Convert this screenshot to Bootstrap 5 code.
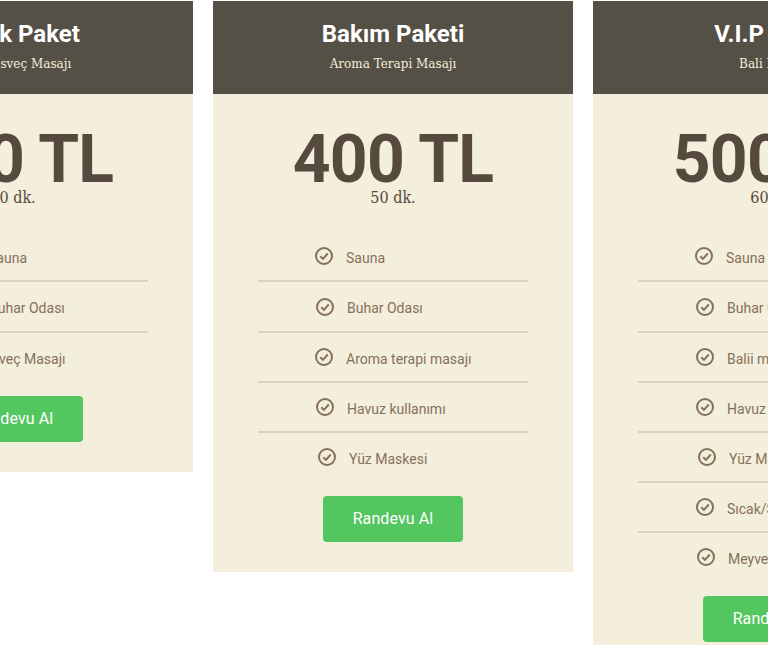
<!DOCTYPE html>
<html lang="en">
<head>
  <meta charset="UTF-8">
  <title>Paketler</title>
  <meta name="viewport" content="width=device-width, initial-scale=1">
  <link href="https://cdn.jsdelivr.net/npm/bootstrap@5.3.3/dist/css/bootstrap.min.css" rel="stylesheet">
  <style>
    html, body { height: 100%; overflow: hidden; }
    body { background: #fff; font-family: Roboto, sans-serif; }
    .price-row { width: 1120px; margin-left: -167px; padding-top: 1px; gap: 20px; }
    .price-card { width: 360px; flex: none; background: #f4eedc; }
    .price-head { height: 93px; background: #555045; color: #f4eedc; padding-top: 18px; text-align: center; }
    .price-head h3 { font-family: Roboto, sans-serif; font-size: 24px; font-weight: 700; line-height: 30px; color: #fff; margin: 0 0 6px; }
    .price-head p { font-family: "DejaVu Serif", serif; font-size: 12px; line-height: 18px; margin: 0; }
    .price-amount { font-size: 66px; font-weight: 700; letter-spacing: -.7px; line-height: 66px; color: #554a3d; text-align: center; padding-top: 33px; }
    .price-time { font-family: "DejaVu Serif Condensed", "DejaVu Serif", serif; font-size: 16px; line-height: 20px; color: #554a3d; text-align: center; margin-top: -5px; }
    .price-list { width: 270px; margin: 24px auto 0; padding: 0; list-style: none; }
    .price-list li { height: 50px; padding: 4px 0 0 57px; border-bottom: 2px solid #dcd2bd; display: flex; align-items: center; gap: 13px; font-size: 14px; color: #85715a; }
    .price-list li:nth-child(2) { height: 51px; }
    .price-list li:last-child { border-bottom: 0; padding-bottom: 2px; }
    .price-list svg { width: 18px; height: 18px; flex: none; margin-top: -4px; }
    .price-list.shift-wide li { padding-left: 79px; }
    .price-list li.nudge-1 { padding-left: 58px; }
    .price-list li.nudge-2 { padding-left: 59px; }
    .price-list li.nudge-3 { padding-left: 60px; }
    .price-list.shift-wide li.nudge-1 { padding-left: 80px; }
    .btn-book { display: block; width: 140px; height: 46px; margin: 13px auto 30px; padding: 0; background: #53c65f; border: 0; border-radius: 4px; color: #fff; font-size: 16px; font-weight: 400; letter-spacing: .1px; line-height: 46px; }
    .btn-book:hover { background: #53c65f; color: #fff; }
  </style>
</head>
<body>
  <svg class="d-none">
    <symbol id="tick" viewBox="0 0 18 18">
      <circle cx="9" cy="9" r="8" fill="none" stroke="#85715a" stroke-width="2"/>
      <path d="M5.3 9.3l2.6 2.6 4.9-5.4" fill="none" stroke="#85715a" stroke-width="2"/>
    </symbol>
  </svg>

  <div class="d-flex align-items-start price-row">
    <div class="price-card">
      <div class="price-head">
        <h3>Klasik Paket</h3>
        <p>Klasik İsveç Masajı</p>
      </div>
      <div class="price-amount">300 TL</div>
      <div class="price-time">30 dk.</div>
      <ul class="price-list shift-wide">
        <li><svg><use href="#tick"/></svg>Sauna</li>
        <li class="nudge-1"><svg><use href="#tick"/></svg>Buhar Odası</li>
        <li><svg><use href="#tick"/></svg>İsveç Masajı</li>
      </ul>
      <a href="#" class="btn btn-book">Randevu Al</a>
    </div>

    <div class="price-card">
      <div class="price-head">
        <h3>Bakım Paketi</h3>
        <p>Aroma Terapi Masajı</p>
      </div>
      <div class="price-amount">400 TL</div>
      <div class="price-time">50 dk.</div>
      <ul class="price-list">
        <li><svg><use href="#tick"/></svg>Sauna</li>
        <li class="nudge-1"><svg><use href="#tick"/></svg>Buhar Odası</li>
        <li><svg><use href="#tick"/></svg>Aroma terapi masajı</li>
        <li class="nudge-1"><svg><use href="#tick"/></svg>Havuz kullanımı</li>
        <li class="nudge-3"><svg><use href="#tick"/></svg>Yüz Maskesi</li>
      </ul>
      <a href="#" class="btn btn-book">Randevu Al</a>
    </div>

    <div class="price-card">
      <div class="price-head">
        <h3>V.I.P Paket</h3>
        <p>Bali Masajı</p>
      </div>
      <div class="price-amount">500 TL</div>
      <div class="price-time">60 dk.</div>
      <ul class="price-list">
        <li><svg><use href="#tick"/></svg>Sauna</li>
        <li class="nudge-1"><svg><use href="#tick"/></svg>Buhar Odası</li>
        <li class="nudge-1"><svg><use href="#tick"/></svg>Balii masajı</li>
        <li class="nudge-1"><svg><use href="#tick"/></svg>Havuz kullanımı</li>
        <li class="nudge-3"><svg><use href="#tick"/></svg>Yüz Maskesi</li>
        <li class="nudge-1"><svg><use href="#tick"/></svg>Sıcak/Soğuk Havlu</li>
        <li class="nudge-2"><svg><use href="#tick"/></svg>Meyve Tabağı</li>
      </ul>
      <a href="#" class="btn btn-book">Randevu Al</a>
    </div>
  </div>

  <script src="https://cdn.jsdelivr.net/npm/bootstrap@5.3.3/dist/js/bootstrap.bundle.min.js"></script>
</body>
</html>
